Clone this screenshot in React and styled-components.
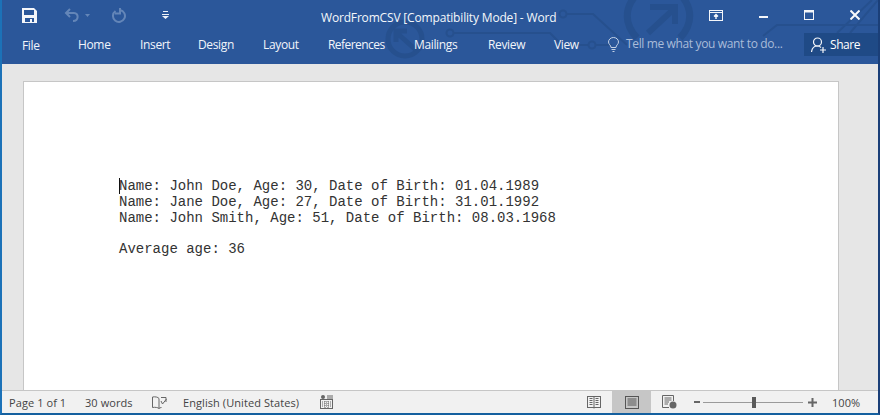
import React from 'react'
import styled, { createGlobalStyle } from 'styled-components'

const GlobalStyle = createGlobalStyle`
  html, body { margin: 0; padding: 0; background: #e6e6e6; }
  body { width: 880px; height: 415px; overflow: hidden; font-family: "Open Sans", "Liberation Sans", sans-serif; }
`

const Frame = styled.div`
  width: 880px;
  height: 415px;
  box-sizing: border-box;
  border-left: 2px solid #1c72b8;
  border-right: 2px solid #1b3f78;
  border-bottom: 2px solid #14609f;
  display: flex;
  flex-direction: column;
`

const Ribbon = styled.header`
  position: relative;
  height: 64px;
  flex: none;
  background: #2b579a;
  color: #fff;
  display: flex;
  flex-direction: column;
  overflow: hidden;
`

const Circuit = styled.svg`
  position: absolute;
  left: -2px;
  top: 0;
`

const TitleRow = styled.div`
  position: relative;
  height: 30px;
  display: flex;
  align-items: center;
`

const QuickAccess = styled.div`
  width: 319px;
  flex: none;
  display: flex;
  align-items: center;
  padding-left: 20px;
  box-sizing: border-box;
`

const QuickIcon = styled.svg`
  display: block;
  flex: none;
  margin-left: ${p => p.$gap || 0}px;
`

const Title = styled.div`
  font-size: 12px;
  letter-spacing: -0.17px;
  white-space: nowrap;
  color: #f4f7fb;
  width: 371px;
  padding-top: 4px;
`

const WindowButtons = styled.div`
  display: flex;
  align-items: center;
`

const WindowButton = styled.div`
  width: ${p => p.$w}px;
  padding-top: ${p => p.$drop || 0}px;
  display: flex;
  justify-content: center;
`

const TabRow = styled.nav`
  position: relative;
  height: 34px;
  display: flex;
  align-items: flex-start;
  padding-left: 20px;
`

const Tab = styled.div`
  width: ${p => p.$w}px;
  flex: none;
  font-size: 12px;
  line-height: 16px;
  letter-spacing: ${p => p.$tight ? -0.55 : -0.35}px;
  padding-top: ${p => p.$file ? 8 : 7}px;
  white-space: nowrap;
  color: #f2f5fa;
`

const TellMe = styled.div`
  width: 196px;
  flex: none;
  display: flex;
  align-items: center;
  gap: 7px;
  padding-top: 6px;
  margin-left: 16px;
  font-size: 12px;
  line-height: 16px;
  color: #a9bcd9;
  white-space: nowrap;
  letter-spacing: -0.36px;
`

const ShareButton = styled.div`
  width: 74px;
  height: 23px;
  margin-top: 3px;
  background: #1f4a86;
  display: flex;
  align-items: center;
  gap: 4px;
  padding-left: 7px;
  box-sizing: border-box;
  font-size: 12px;
  letter-spacing: -0.45px;
`

const Workspace = styled.main`
  flex: 1;
  min-height: 0;
  background: #e6e6e6;
  padding: 17px 0 0 21px;
  overflow: hidden;
`

const Page = styled.div`
  position: relative;
  width: 816px;
  height: 320px;
  box-sizing: border-box;
  background: #fff;
  border: 1px solid #c6c6c6;
  border-bottom: 0;
  padding: 96px 0 0 95px;
`

const Line = styled.div`
  font-family: "Liberation Mono", "Courier New", monospace;
  font-size: 14px;
  line-height: 16px;
  height: ${p => p.$blank ? 15 : 16}px;
  color: #333;
  white-space: pre;
`

const Caret = styled.span`
  position: absolute;
  left: 95px;
  top: 96px;
  width: 1px;
  height: 16px;
  background: #111;
`

const StatusBar = styled.footer`
  height: 23px;
  flex: none;
  box-sizing: border-box;
  border-top: 1px solid #c6c6c6;
  background: #f1f1f1;
  display: flex;
  align-items: center;
  font-size: 11px;
  letter-spacing: 0.08px;
  color: #444;
`

const StatusText = styled.span`
  width: ${p => p.$w}px;
  flex: none;
  white-space: nowrap;
`

const StatusSlot = styled.div`
  width: ${p => p.$w}px;
  height: 22px;
  flex: none;
  display: flex;
  align-items: center;
  justify-content: center;
  background: ${p => p.$active ? '#c6c6c6' : 'transparent'};
`

const ZoomTrack = styled.div`
  position: relative;
  width: 100px;
  height: 1px;
  flex: none;
  margin: 0 5px 0 1px;
  background: #9a9a9a;
`

const ZoomThumb = styled.span`
  position: absolute;
  left: 49px;
  top: -5px;
  width: 4px;
  height: 11px;
  background: #5a5a5a;
`

const tabs = [
  { label: 'File', width: 56, file: true },
  { label: 'Home', width: 62 },
  { label: 'Insert', width: 58 },
  { label: 'Design', width: 65 },
  { label: 'Layout', width: 65 },
  { label: 'References', width: 86, tight: true },
  { label: 'Mailings', width: 74 },
  { label: 'Review', width: 66 },
  { label: 'View', width: 38 },
]

const lines = [
  'Name: John Doe, Age: 30, Date of Birth: 01.04.1989',
  'Name: Jane Doe, Age: 27, Date of Birth: 31.01.1992',
  'Name: John Smith, Age: 51, Date of Birth: 08.03.1968',
  ' ',
  'Average age: 36',
]

export default function App() {
  return (
    <>
      <GlobalStyle />
      <Frame>
        <Ribbon>
          <Circuit width="880" height="64" viewBox="0 0 880 64" fill="none" stroke="#26508e">
            <g strokeWidth="2">
              <circle cx="450" cy="33" r="3.5" />
              <path d="M454 33 H550 L562 45 H588" />
              <circle cx="592" cy="45" r="3.5" />
              <path d="M596 45 H612" />
              <circle cx="563" cy="14" r="3.5" />
              <path d="M567 14 H593 L627 45" />
              <path d="M763 36 L777 25 H880 M837 33 L872 0 M850 33 L878 0" />
            </g>
            <circle cx="405" cy="39" r="17" strokeWidth="5" />
            <path d="M416 50 L397 33 M396 42 V31 H407" strokeWidth="5" />
            <path d="M637 -6 C624 8 624 24 637 38 M680 -6 C693 8 693 24 680 38" strokeWidth="7" />
            <path d="M648 33 L675 8 M650 7 H675 V24" strokeWidth="6" />
          </Circuit>
          <TitleRow>
            <QuickAccess>
              <QuickIcon width="15" height="15" viewBox="0 0 15 15">
                <path d="M0 0H12L15 3V15H0Z" fill="#f4f6fa" />
                <rect x="2" y="2" width="10" height="5" fill="#2b579a" />
                <rect x="3" y="10" width="9" height="4" fill="#2b579a" />
                <rect x="8" y="11" width="2" height="3" fill="#f4f6fa" />
              </QuickIcon>
              <QuickIcon $gap="27" width="16" height="14" viewBox="0 0 16 14" fill="none" stroke="#6486b8" strokeWidth="2">
                <path d="M6 1 L2 5 L6 9 M2 5 H10 C15 5 15 13 9 13" />
              </QuickIcon>
              <QuickIcon $gap="5" width="6" height="3" viewBox="0 0 6 3">
                <path d="M0 0H5L2.5 3Z" fill="#6486b8" />
              </QuickIcon>
              <QuickIcon $gap="20" width="15" height="15" viewBox="0 0 15 15" fill="none" stroke="#6486b8" strokeWidth="2">
                <path d="M9 2 A6 6 0 1 1 4.5 3 M9 0 V5.5 H4" />
              </QuickIcon>
              <QuickIcon $gap="36" width="7" height="8" viewBox="0 0 7 8">
                <path d="M1 0H6V1H1Z M0 3H7V4H0Z M0 5H7L3.5 8Z" fill="#eef2f8" />
              </QuickIcon>
            </QuickAccess>
            <Title>WordFromCSV [Compatibility Mode] - Word</Title>
            <WindowButtons>
              <WindowButton $w="48">
                <svg width="14" height="11" viewBox="0 0 14 11" fill="none" stroke="#f4f6fa">
                  <rect x="0.5" y="0.5" width="13" height="10" />
                  <path d="M0.5 2.5H13.5" />
                  <path d="M7 9V5M5 6.5L7 4.5L9 6.5" strokeWidth="1.4" />
                </svg>
              </WindowButton>
              <WindowButton $w="46" $drop="4">
                <svg width="9" height="2" viewBox="0 0 9 2"><rect width="9" height="2" fill="#f4f6fa" /></svg>
              </WindowButton>
              <WindowButton $w="46">
                <svg width="10" height="10" viewBox="0 0 10 10" fill="none" stroke="#f4f6fa">
                  <rect x="0.5" y="0.5" width="9" height="9" />
                  <path d="M0 1.5H10" strokeWidth="2" />
                </svg>
              </WindowButton>
              <WindowButton $w="46">
                <svg width="10" height="10" viewBox="0 0 10 10" stroke="#f8fafc" strokeWidth="2">
                  <path d="M0.5 0.5L9.5 9.5M9.5 0.5L0.5 9.5" />
                </svg>
              </WindowButton>
            </WindowButtons>
          </TitleRow>
          <TabRow>
            {tabs.map(tab => (
              <Tab key={tab.label} $w={tab.width} $file={tab.file} $tight={tab.tight}>{tab.label}</Tab>
            ))}
            <TellMe>
              <svg width="11" height="15" viewBox="0 0 11 15" fill="none" stroke="#c3d0e4">
                <path d="M3 10.5C3 8 0.5 7.5 0.5 5A5 4.5 0 0 1 10.5 5C10.5 7.5 8 8 8 10.5Z" />
                <path d="M3.5 12.5H7.5M4.5 14.5H6.5" />
              </svg>
              Tell me what you want to do...
            </TellMe>
            <ShareButton>
              <svg width="15" height="16" viewBox="0 0 15 16" fill="none" stroke="#f4f6fa" strokeWidth="1.2">
                <circle cx="6.5" cy="5" r="4" />
                <path d="M0.5 15C1 11 3.5 9 6.5 9C8 9 9 9.5 10 10.5" />
                <path d="M9 13H15M12 10V16" />
              </svg>
              Share
            </ShareButton>
          </TabRow>
        </Ribbon>
        <Workspace>
          <Page>
            <Caret />
            {lines.map((line, i) => <Line key={i} $blank={line === ' '}>{line}</Line>)}
          </Page>
        </Workspace>
        <StatusBar>
          <StatusSlot $w="7" />
          <StatusText $w="76">Page 1 of 1</StatusText>
          <StatusText $w="66">30 words</StatusText>
          <StatusSlot $w="16">
            <svg width="15" height="13" viewBox="0 0 15 13" fill="none" stroke="#666">
              <path d="M7 2.5C6 1 3 0.5 0.5 1V11.5C3 11 6 11.5 7 12.5C7.5 12 8.5 11.5 9.5 11.5M7 2.5V12.5" />
              <path d="M9 1.5H14V6M9 5L10.5 8L14.5 3" />
            </svg>
          </StatusSlot>
          <StatusSlot $w="16" />
          <StatusText $w="136">English (United States)</StatusText>
          <StatusSlot $w="14">
            <svg width="13" height="14" viewBox="0 0 13 14" fill="none" stroke="#666">
              <rect x="0.5" y="4.5" width="12" height="9" />
              <path d="M2 7H11M2 9H11M2 11H11M5 6V13M8 6V13" strokeDasharray="1 1" />
              <circle cx="3" cy="2" r="2" fill="#666" stroke="none" />
              <path d="M7 1H13M7 3H13" />
            </svg>
          </StatusSlot>
          <StatusSlot $w="242" />
          <StatusSlot $w="37">
            <svg width="14" height="13" viewBox="0 0 14 13" fill="none" stroke="#666">
              <rect x="0.5" y="0.5" width="13" height="11" />
              <path d="M7 0.5V12.5M2.5 2.5H5.5M2.5 4.5H5.5M2.5 6.5H5.5M2.5 8.5H5.5M8.5 2.5H11.5M8.5 4.5H11.5M8.5 6.5H11.5M8.5 8.5H11.5" />
            </svg>
          </StatusSlot>
          <StatusSlot $w="39" $active>
            <svg width="14" height="13" viewBox="0 0 14 13" fill="none" stroke="#555">
              <rect x="0.5" y="0.5" width="13" height="12" />
              <path d="M2.5 3H11.5M2.5 5H11.5M2.5 7H11.5M2.5 9H11.5" />
            </svg>
          </StatusSlot>
          <StatusSlot $w="36">
            <svg width="15" height="14" viewBox="0 0 15 14" fill="none" stroke="#666">
              <path d="M0.5 0.5H11.5V6M0.5 0.5V12.5H7" />
              <path d="M2.5 3H9.5M2.5 5H9.5M2.5 7H7M2.5 9H6" />
              <circle cx="11" cy="10" r="3.5" fill="#666" stroke="none" />
            </svg>
          </StatusSlot>
          <StatusSlot $w="7" />
          <svg width="8" height="8" viewBox="0 0 8 8"><rect y="3" width="6" height="2" fill="#666" /></svg>
          <ZoomTrack><ZoomThumb /></ZoomTrack>
          <svg width="9" height="9" viewBox="0 0 9 9"><path d="M0 3.5H9V5.5H0Z M3.5 0H5.5V9H3.5Z" fill="#666" /></svg>
          <StatusSlot $w="15" />
          <StatusText $w="30">100%</StatusText>
        </StatusBar>
      </Frame>
    </>
  )
}
